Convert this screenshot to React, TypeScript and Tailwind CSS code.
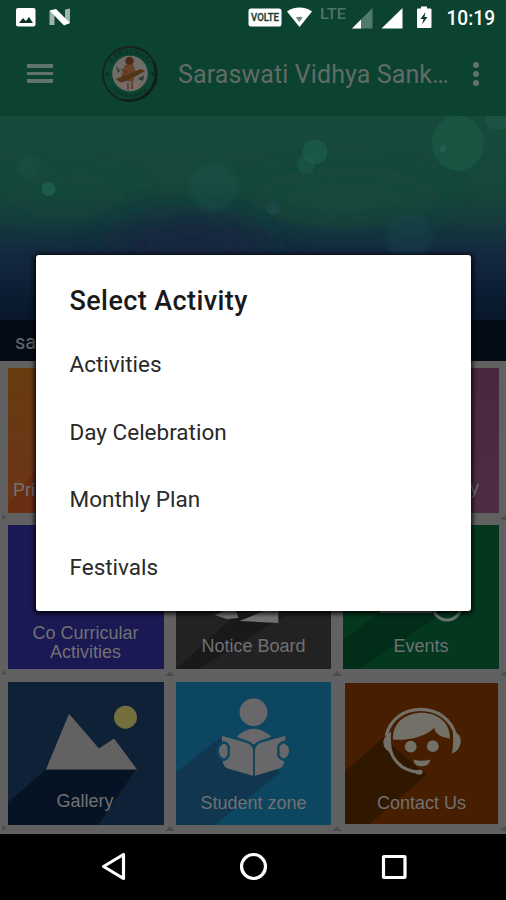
import type { ReactNode } from "react";

const activities = ["Activities", "Day Celebration", "Monthly Plan", "Festivals"];

function StatusBar() {
  return (
    <div className="flex h-[34px] text-white">
      <svg width="506" height="34" viewBox="0 0 506 34" fill="currentColor">
        <rect x="16" y="8" width="19.5" height="18.5" rx="2" />
        <path d="M19 23l4-5 3 3 3-4 4 6z" fill="#0b3325" />
        <path d="M49.5 11l5-1v15h-5zM65 9.500l5-1V23l-5 1.500z" opacity=".6" />
        <path d="M49.500 10.500L56 9l14 14-6 2.500z" />
        <rect x="248.500" y="8.500" width="33" height="18" rx="2.500" />
        <text x="251" y="21" fontSize="10" fontWeight="500" textLength="28" lengthAdjust="spacingAndGlyphs" fill="#173f30" stroke="#173f30" strokeWidth=".3" fontFamily="Roboto, sans-serif">VOLTE</text>
        <path d="M287 11.500C293.500 6 305.500 6 312 11.500L299.500 27z" />
        <path d="M295.800 17.500q3.700-1.500 7 0l-3.500 4.500z" fill="#6d8d80" />
        <text x="320" y="18.500" fontSize="15.500" fontWeight="500" textLength="26" lengthAdjust="spacingAndGlyphs" fill="#4d7666" fontFamily="Roboto, sans-serif">LTE</text>
        <path d="M352 28.500L372.500 8v20.500z" fill="#527a6b" />
        <path d="M352 28.500L361 19.500v9z" />
        <path d="M381.500 28.500L402.500 8v20.500z" />
        <path d="M421 6.500h6v2h3.500q1 0 1 1v17.500q0 1-1 1h-12.500q-1 0-1-1V9.500q0-1 1-1h3z" />
        <path d="M425.500 12l-5 7h3l-1.500 5.500 5.500-7.500h-3z" fill="#0b3f2e" />
        <text x="446.500" y="25" fontSize="19.500" fontWeight="500" textLength="48.500" lengthAdjust="spacingAndGlyphs" fontFamily="Roboto, sans-serif">10:19</text>
      </svg>
    </div>
  );
}

function Logo() {
  return (
    <svg width="58" height="58" viewBox="0 0 58 58" className="ml-[48px]">
      <defs>
        <path id="ringTop" d="M9 29a20 20 0 0 1 40 0" />
        <path id="ringBottom" d="M5.500 29a23.500 23.500 0 0 0 47 0" />
      </defs>
      <circle cx="29" cy="29" r="27" fill="#0b4531" stroke="#16231f" strokeWidth="1.800" />
      <path d="M52 17A27 27 0 0 1 22 55" fill="none" stroke="#101d19" strokeWidth="2.200" />
      <circle cx="29" cy="28.500" r="17.800" fill="#706c68" />
      <text fontSize="7" fontWeight="700" fill="#122b22" fontFamily="Liberation Sans, sans-serif">
        <textPath href="#ringTop" startOffset="50%" textAnchor="middle">SARASWATI</textPath>
      </text>
      <text fontSize="5" fontWeight="700" fill="#122b22" fontFamily="Liberation Sans, sans-serif">
        <textPath href="#ringBottom" startOffset="50%" textAnchor="middle">VIDHYA SANKUL</textPath>
      </text>
      <circle cx="6.500" cy="29" r="1.400" fill="#11251e" />
      <circle cx="51.500" cy="29" r="1.400" fill="#11251e" />
      <circle cx="28.500" cy="16" r="4.200" fill="#4d2916" />
      <path d="M24 20l8-1 3 9-3 9-8-1-4-5z" fill="#694227" />
      <path d="M15 34l25-10 4 2-7 4-17 8z" fill="#523515" />
      <path d="M15 21l4 5-2 2zM37 34l6-4-1 6z" fill="#343c32" />
      <path d="M18 37l7 2-2 4zM31 38l8 1-5 4z" fill="#8a6960" />
      <path d="M27 38v7M31 37v7M20 24l6 4" stroke="#593724" strokeWidth="1.500" />
    </svg>
  );
}

function AppBar() {
  return (
    <div className="flex h-[82px] items-center pb-[3px] text-[#61746b]">
      <div className="ml-[27px] flex w-[26px] flex-col gap-1">
        <span className="h-[3.5px] bg-current" />
        <span className="h-[3.5px] bg-current" />
        <span className="h-[3.5px] bg-current" />
      </div>
      <Logo />
      <h1 className="ml-[19px] w-[271px] pt-[2px] text-[25px] tracking-[0.1px] whitespace-nowrap text-[#626b66]">Saraswati Vidhya Sank…</h1>
      <div className="ml-[23.5px] flex flex-col gap-[3px]">
        <span className="size-[6px] rounded-full bg-current" />
        <span className="size-[6px] rounded-full bg-current" />
        <span className="size-[6px] rounded-full bg-current" />
      </div>
    </div>
  );
}

function Banner() {
  return (
    <svg width="506" height="204" viewBox="0 116 506 204" className="block">
      <defs>
        <linearGradient id="sky" x1="0" y1="0" x2="0" y2="1">
          <stop offset="0" stopColor="#164a3b" />
          <stop offset=".35" stopColor="#15483a" />
          <stop offset=".5" stopColor="#153d3d" />
          <stop offset=".68" stopColor="#13283e" />
          <stop offset="1" stopColor="#07162b" />
        </linearGradient>
        <filter id="soft" x="-60%" y="-200%" width="220%" height="500%">
          <feGaussianBlur stdDeviation="22 14" />
        </filter>
        <filter id="edge" x="-20%" y="-20%" width="140%" height="140%">
          <feGaussianBlur stdDeviation="2" />
        </filter>
      </defs>
      <rect y="116" width="506" height="204" fill="url(#sky)" />
      <ellipse cx="190" cy="243" rx="75" ry="30" fill="#14213f" opacity=".7" filter="url(#soft)" />
      <ellipse cx="345" cy="198" rx="90" ry="22" fill="#15483a" opacity=".85" filter="url(#soft)" />
      <ellipse cx="65" cy="195" rx="55" ry="16" fill="#15493a" opacity=".7" filter="url(#soft)" />
      <circle cx="214" cy="187" r="24" fill="#1b574f" opacity=".38" filter="url(#edge)" />
      <circle cx="29" cy="167" r="12" fill="#1d5946" opacity=".35" filter="url(#edge)" />
      <circle cx="409" cy="236" r="24" fill="#1d4852" opacity=".3" filter="url(#edge)" />
      <circle cx="48.500" cy="189" r="7" fill="#1b5d4a" />
      <circle cx="273" cy="208" r="7" fill="#194846" />
      <circle cx="315" cy="152" r="12.500" fill="#1b5747" />
      <circle cx="306" cy="165" r="9" fill="#236652" opacity=".35" />
      <ellipse cx="458" cy="143" rx="26" ry="28" fill="#195342" />
      <circle cx="443" cy="149" r="3.500" fill="#226350" opacity=".8" />
      <ellipse cx="498" cy="120" rx="13" ry="10" fill="#1a5344" />
    </svg>
  );
}

type TileProps = {
  className: string;
  label?: ReactNode;
  labelClass?: string;
  children?: ReactNode;
};

function Tile({ className, label, labelClass = "pb-[13px]", children }: TileProps) {
  return (
    <div className={`relative flex flex-col justify-end overflow-hidden ${className}`}>
      <svg viewBox="0 0 156 144" preserveAspectRatio="none" className="absolute inset-0 h-full w-full">{children}</svg>
      <p className={`relative text-center font-['Liberation_Sans',sans-serif] text-[18px] leading-[19px] text-[#717174] ${labelClass}`}>{label}</p>
    </div>
  );
}

function TileGrid() {
  return (
    <div className="relative h-[473px] bg-[#616161] px-[8px] pt-[7px]">
      {/* corner marks between the tiles */}
      <svg width="506" height="473" className="absolute inset-0" fill="#4d4d4f">
        {[157, 313, 468].map((y) => (
          <path key={y} d={`M2 ${y - 4}l5 4-5 1zM165 ${y + 2}l5-5 5 5zM332 ${y + 2}l5-5 5 5zM500 ${y + 1}l6-4v5z`} />
        ))}
      </svg>
      <div className="relative grid grid-cols-[156px_155px_156px] grid-rows-[145px_144px_143px] gap-x-[12px] gap-y-[12.5px]">
        <Tile className="bg-linear-to-b from-[#683b10] to-[#6b3518]" label="Pri" labelClass="pl-[5px] pb-[13px] text-left!">
          <path d="M0 136L28 100V144H0z" fill="#68250e" opacity=".45" />
        </Tile>
        <Tile className="bg-[#333]" />
        <Tile className="bg-linear-to-b from-[#48283f] to-[#4d2c46]" label="y" labelClass="pr-[20px] pb-[15px] text-right!" />
        <Tile className="-mt-px mb-px bg-[#1b1953]" label={<>Co Curricular<br />Activities</>} labelClass="pb-[7px] pr-px" />
        <Tile className="-mt-px mb-px bg-[#222]" label="Notice Board">
          <path d="M0 144L60 90h50L23 144z" fill="#191919" />
          <path d="M39 90l20-8 4 11-12 1zM64 96l32-13 7 0v15z" fill="#717171" />
        </Tile>
        <Tile className="-mt-px mb-px bg-[#03381f]" label="Events">
          <path d="M0 115L40 85h64L17 144H0z" fill="#022e19" />
          <path d="M37 87h52" stroke="#68736d" strokeWidth="2" />
          <circle cx="104" cy="81" r="14" fill="none" stroke="#68736d" strokeWidth="3" />
        </Tile>
        <Tile className="bg-[#0e2136]" label="Gallery" labelClass="pb-[14px] pr-[2px]">
          <path d="M0 121L38 88H128L90 144H0z" fill="#061325" />
          <path d="M38 88L61 32 91 67 106 57 129 88z" fill="#626262" />
          <circle cx="117.500" cy="35.500" r="11.500" fill="#756e3d" />
        </Tile>
        <Tile className="bg-[#0d4660]" label="Student zone" labelClass="pb-[12px]">
          <path d="M0 91L47 54 105 91 39 144H0z" fill="#103650" />
          <g fill="#68686a">
            <circle cx="78" cy="30.500" r="14" />
            <path d="M61 55Q78 39 96 55L78 63z" />
            <path d="M46 53L71 60Q77 62 77.500 67V94.500L52 87Q47 85 47 78zM110 53L85 60Q80 62 79.500 67V94.500L104 87Q109 85 109 78z" />
          </g>
          <path d="M46 53L71 60Q77 62 78.500 67 80 62 85 60L110 53" fill="none" stroke="#0d4660" strokeWidth="2.500" />
          <path d="M78.500 65V95" stroke="#18465b" strokeWidth="1.800" />
          <g fill="#68686a" stroke="#0d4660" strokeWidth="2.500">
            <path d="M48 60.500q4 1 5 5v8q-1 4-5 5-6-3-6-9t6-9zM109 60.500q-5 1-6 5v8q1 4 6 5 6-3 6-9t-6-9z" />
          </g>
        </Tile>
        <Tile className="mt-[1px] mr-[1px] mb-[1px] ml-[2px] bg-[#471f00]" label="Contact Us" labelClass="pb-[11px]">
          <path d="M0 90L39 56 83 94 25 144H0z" fill="#301700" />
          <g fill="#737068">
            <path d="M42 54C50 18 104 18 113 54" fill="none" stroke="#737068" strokeWidth="3.200" />
            <path d="M49 58C47 22 108 21 107 57L99 55Q92 52 91 46 77 59 49 58z" />
            <path d="M43 53q2-3 4-3-1 13 2 22-10-3-10-12 1-5 4-7zM112 50q7 3 6 11-2 9-9 11 2-10 1-22z" />
            <path d="M46 69Q54 90 76 91" fill="none" stroke="#737068" strokeWidth="3.200" />
            <rect x="72" y="88.500" width="7" height="5" rx="2" />
            <circle cx="67" cy="65" r="6" />
            <circle cx="89.500" cy="64.500" r="6" />
            <path d="M70 78q8 3 17 0-1 7-9 7t-8-7z" />
          </g>
        </Tile>
      </div>
    </div>
  );
}

function ActivityDialog() {
  return (
    <div className="absolute top-[255px] left-[36px] h-[356px] w-[435px] rounded-[3px] bg-white pl-[33.5px] text-[#292929] shadow-[0_1px_4px_2px_rgba(0,0,0,0.8)]">
      <h2 className="pt-[29px] text-[27px] leading-[34px] font-medium tracking-[0.4px] text-[#191919]">Select Activity</h2>
      <ul className="pt-[13px]">
        {activities.map((item) => (
          <li key={item} className="flex h-[67.5px] items-center pt-px text-[22.5px]">{item}</li>
        ))}
      </ul>
    </div>
  );
}

function NavBar() {
  return (
    <div className="h-[66px] bg-black">
      <svg width="506" height="66" fill="none" stroke="#fff" strokeWidth="3.200" strokeLinejoin="round">
        <path d="M103.500 32.500L123.500 20.500V44.500z" />
        <circle cx="253.500" cy="32.500" r="12" />
        <rect x="383.500" y="22.500" width="21.500" height="21" rx=".5" />
      </svg>
    </div>
  );
}

export default function App() {
  return (
    <div className="relative h-[900px] w-[506px] overflow-hidden bg-black font-[Roboto,sans-serif]">
      <div className="h-[116px] bg-[#0b4230]">
        <StatusBar />
        <AppBar />
      </div>
      <Banner />
      <div className="flex h-[41px] items-center bg-[#050b16] pl-[15px] pt-[2px] text-[20px] text-[#68696d]">sa</div>
      <TileGrid />
      <NavBar />
      <ActivityDialog />
    </div>
  );
}
